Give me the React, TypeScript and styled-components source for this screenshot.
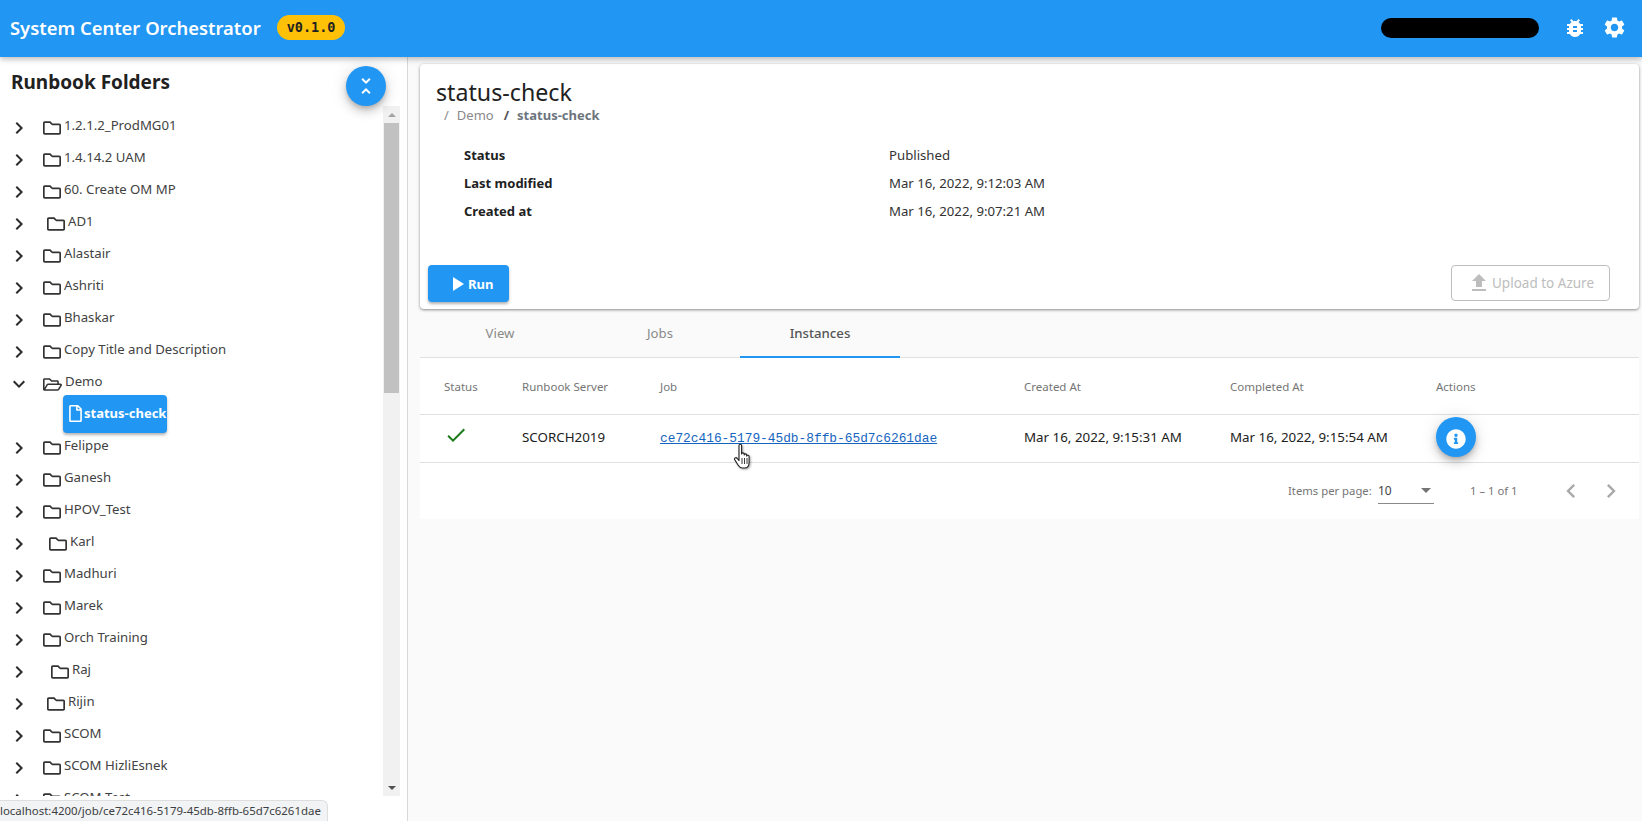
import React from "react";
import styled, { createGlobalStyle } from "styled-components";
import { FaRegFile, FaRegFolder, FaRegFolderOpen, FaInfoCircle } from "react-icons/fa";
import {
  MdBugReport,
  MdCheck,
  MdChevronLeft,
  MdChevronRight,
  MdExpandMore,
  MdFileUpload,
  MdPlayArrow,
  MdSettings,
  MdUnfoldLess,
} from "react-icons/md";

const folders = [
  { name: "1.2.1.2_ProdMG01" },
  { name: "1.4.14.2 UAM" },
  { name: "60. Create OM MP" },
  { name: "AD1", shift: 4 },
  { name: "Alastair" },
  { name: "Ashriti" },
  { name: "Bhaskar" },
  { name: "Copy Title and Description" },
  { name: "Demo", open: true },
  { name: "Felippe" },
  { name: "Ganesh" },
  { name: "HPOV_Test" },
  { name: "Karl", shift: 6 },
  { name: "Madhuri" },
  { name: "Marek" },
  { name: "Orch Training" },
  { name: "Raj", shift: 8 },
  { name: "Rijin", shift: 4 },
  { name: "SCOM" },
  { name: "SCOM HizliEsnek" },
  { name: "SCOM Test" },
];

const details = [
  { label: "Status", value: "Published" },
  { label: "Last modified", value: "Mar 16, 2022, 9:12:03 AM" },
  { label: "Created at", value: "Mar 16, 2022, 9:07:21 AM" },
];

const App: React.FunctionComponent = () => {
  return (
    <>
      <GlobalStyle />
      <Page>
        <Header>
          <Title>System Center Orchestrator</Title>
          <VersionBadge>v0.1.0</VersionBadge>
          <Spacer />
          <RedactedName />
          <HeaderIcon>
            <MdBugReport size={24} />
          </HeaderIcon>
          <HeaderIcon>
            <MdSettings size={25} />
          </HeaderIcon>
        </Header>
        <Body>
          <Sidebar>
            <SidebarTop>
              <SidebarTitle>Runbook Folders</SidebarTitle>
              <CollapseButton>
                <MdUnfoldLess size={24} />
              </CollapseButton>
            </SidebarTop>
            <TreeArea>
              <Tree>
                {folders.map((folder) => (
                  <React.Fragment key={folder.name}>
                    <TreeRow>
                      <Toggle>
                        {folder.open ? <MdExpandMore size={24} /> : <MdChevronRight size={24} />}
                      </Toggle>
                      <FolderIcon $shift={folder.shift ?? 0}>
                        {folder.open ? <FaRegFolderOpen size={19} /> : <FaRegFolder size={18} />}
                      </FolderIcon>
                      <FolderName>{folder.name}</FolderName>
                    </TreeRow>
                    {folder.open && (
                      <ChildRow>
                        <ActiveNode>
                          <FaRegFile size={17} />
                          <ActiveLabel>status-check</ActiveLabel>
                        </ActiveNode>
                      </ChildRow>
                    )}
                  </React.Fragment>
                ))}
              </Tree>
              <ScrollTrack>
                <ScrollArrow $up />
                <ScrollThumb />
                <ScrollRest />
                <ScrollArrow />
              </ScrollTrack>
            </TreeArea>
          </Sidebar>
          <Main>
            <Card>
              <CardTitle>status-check</CardTitle>
              <Breadcrumb>
                <span>/</span>
                <span>Demo</span>
                <b>/</b>
                <b>status-check</b>
              </Breadcrumb>
              <Details>
                {details.map((row) => (
                  <DetailRow key={row.label}>
                    <DetailLabel>{row.label}</DetailLabel>
                    <DetailValue>{row.value}</DetailValue>
                  </DetailRow>
                ))}
              </Details>
              <CardActions>
                <RunButton>
                  <MdPlayArrow size={24} />
                  Run
                </RunButton>
                <UploadButton disabled>
                  <MdFileUpload size={24} />
                  Upload to Azure
                </UploadButton>
              </CardActions>
            </Card>
            <Tabs>
              <Tab>View</Tab>
              <Tab>Jobs</Tab>
              <Tab $active>Instances</Tab>
            </Tabs>
            <TableCard>
              <TableHead>
                <StatusCell>Status</StatusCell>
                <ServerCell>Runbook Server</ServerCell>
                <JobCell>Job</JobCell>
                <DateCell>Created At</DateCell>
                <DateCell>Completed At</DateCell>
                <div>Actions</div>
              </TableHead>
              <TableRow>
                <StatusCell>
                  <CheckIcon>
                    <MdCheck size={24} />
                  </CheckIcon>
                </StatusCell>
                <ServerCell>SCORCH2019</ServerCell>
                <JobCell>
                  <JobLink href="#">ce72c416-5179-45db-8ffb-65d7c6261dae</JobLink>
                  <HandCursor width="20" height="27" viewBox="0 0 20 27">
                    <path
                      d="M6 2.500c0-1.600 2.600-1.600 2.600 0V11c.1-1.500 2.600-1.500 2.600.1v.8c.1-1.400 2.500-1.400 2.500.2v1c.2-1.300 2.400-1.200 2.400.4v6c0 3.200-1.500 5.500-4.500 5.500H9.500c-2.300 0-3.400-1.200-4.500-3l-3.200-5.200c-.9-1.700 1.200-2.900 2.300-1.500L6 17.500z"
                      fill="#fff"
                      stroke="#222"
                      strokeWidth="1.100"
                      strokeLinejoin="round"
                    />
                    <path d="M9 15v6M11.500 15v6M14 15v6" stroke="#222" strokeWidth="0.900" />
                  </HandCursor>
                </JobCell>
                <DateCell>Mar 16, 2022, 9:15:31 AM</DateCell>
                <DateCell>Mar 16, 2022, 9:15:54 AM</DateCell>
                <div>
                  <InfoButton>
                    <FaInfoCircle size={20} />
                  </InfoButton>
                </div>
              </TableRow>
              <Paginator>
                <PageLabel>Items per page:</PageLabel>
                <PageSelect>
                  <span>10</span>
                  <SelectCaret />
                </PageSelect>
                <PageRange>1 – 1 of 1</PageRange>
                <PageArrow>
                  <MdChevronLeft size={28} />
                </PageArrow>
                <PageArrow>
                  <MdChevronRight size={28} />
                </PageArrow>
              </Paginator>
            </TableCard>
          </Main>
        </Body>
        <StatusBubble>localhost:4200/job/ce72c416-5179-45db-8ffb-65d7c6261dae</StatusBubble>
      </Page>
    </>
  );
};

const GlobalStyle = createGlobalStyle`
  html, body {
    margin: 0;
    height: 100%;
    overflow: hidden;
  }
  body {
    font-family: "Noto Sans", "Open Sans", sans-serif;
    color: #212121;
    background: #fafafa;
  }
  * {
    box-sizing: border-box;
  }
`;

const Page = styled.div`
  display: flex;
  flex-direction: column;
  height: 821px;
  position: relative;
  overflow: hidden;
`;

const Header = styled.header`
  position: relative;
  z-index: 2;
  flex: 0 0 57px;
  display: flex;
  align-items: center;
  padding: 0 15px 2px 10px;
  background: #2196f3;
  color: #fff;
  box-shadow: 0 2px 6px rgba(0, 0, 0, 0.28);
`;

const Title = styled.div`
  font-size: 18.400px;
  font-weight: 600;
`;

const VersionBadge = styled.div`
  margin-left: 16px;
  padding: 0 10px;
  height: 25px;
  line-height: 25px;
  border-radius: 13px;
  background: #ffc107;
  color: #212121;
  font-family: "DejaVu Sans Mono", "Liberation Mono", monospace;
  font-size: 13.500px;
  font-weight: 700;
`;

const Spacer = styled.div`
  flex: 1;
`;

const RedactedName = styled.div`
  width: 158px;
  height: 20px;
  border-radius: 10px;
  background: #000;
  margin-right: 8px;
`;

const HeaderIcon = styled.div`
  display: flex;
  width: 25px;
  justify-content: center;
  margin-left: 15px;
`;

const Body = styled.div`
  flex: 1;
  min-height: 0;
  display: flex;
`;

const Sidebar = styled.aside`
  flex: 0 0 408px;
  display: flex;
  flex-direction: column;
  background: #fff;
  border-right: 1px solid #d8d8d8;
  min-height: 0;
  padding-bottom: 25px;
`;

const SidebarTop = styled.div`
  flex: 0 0 49px;
  display: flex;
  align-items: flex-start;
  justify-content: space-between;
  padding: 9px 21px 0 11px;
`;

const SidebarTitle = styled.h2`
  margin: 1px 0 0;
  font-size: 19px;
  font-weight: 700;
  line-height: 30px;
  color: #212121;
`;

const RoundButton = styled.div`
  width: 40px;
  height: 40px;
  border-radius: 50%;
  display: flex;
  align-items: center;
  justify-content: center;
  background: #2196f3;
  color: #fff;
  box-shadow: 0 3px 5px -1px rgba(0, 0, 0, 0.2), 0 6px 10px 0 rgba(0, 0, 0, 0.14),
    0 1px 18px 0 rgba(0, 0, 0, 0.12);
`;

const CollapseButton = styled(RoundButton)`
  position: relative;
  z-index: 1;
`;

const TreeArea = styled.div`
  flex: 1;
  min-height: 0;
  display: flex;
  padding-right: 7px;
`;

const Tree = styled.div`
  flex: 1;
  min-width: 0;
  overflow: hidden;
  padding-top: 5px;
`;

const TreeRow = styled.div`
  height: 32px;
  display: flex;
  align-items: center;
  color: #333;
`;

const Toggle = styled.div`
  flex: 0 0 43px;
  display: flex;
  padding-left: 7px;
  color: #2b2b2b;
  padding-top: 2px;
`;

const FolderIcon = styled.div<{ $shift: number }>`
  display: flex;
  margin-left: ${(p) => p.$shift}px;
  margin-right: 3px;
  padding-top: 2px;
  color: #333;
`;

const FolderName = styled.span`
  font-size: 13.200px;
  line-height: 18px;
  margin-bottom: 5px;
  color: #424242;
`;

const ChildRow = styled.div`
  height: 32px;
  padding-left: 63px;
  display: flex;
  align-items: center;
`;

const ActiveNode = styled.div`
  height: 38px;
  display: flex;
  align-items: center;
  gap: 0;
  padding: 0 1px 0 4px;
  margin-bottom: 3px;
  background: #2196f3;
  color: #fff;
  border-radius: 4px;
  font-size: 13px;
  font-weight: 700;
  box-shadow: 0 2px 3px rgba(0, 0, 0, 0.3);
`;

const ActiveLabel = styled.span`
  margin-bottom: 2px;
`;

const ScrollTrack = styled.div`
  flex: 0 0 17px;
  display: flex;
  flex-direction: column;
  background: #f1f1f1;
`;

const ScrollArrow = styled.div<{ $up?: boolean }>`
  flex: 0 0 17px;
  display: flex;
  align-items: center;
  justify-content: center;
  &::after {
    content: "";
    border-left: 4px solid transparent;
    border-right: 4px solid transparent;
    ${(p) => (p.$up ? "border-bottom: 4px solid #a3a3a3;" : "border-top: 4px solid #505050;")}
  }
`;

const ScrollThumb = styled.div`
  flex: 0 0 270px;
  background: #c1c1c1;
  margin: 0 1px;
`;

const ScrollRest = styled.div`
  flex: 1;
`;

const Main = styled.main`
  flex: 1;
  min-width: 0;
  padding: 7px 3px 0 12px;
  display: flex;
  flex-direction: column;
  background: #fafafa;
`;

const Card = styled.section`
  height: 245px;
  display: flex;
  flex-direction: column;
  background: #fff;
  border-radius: 4px;
  padding: 13px 29px 7px 8px;
  box-shadow: 0 1px 3px rgba(0, 0, 0, 0.45);
`;

const CardTitle = styled.h1`
  margin: 0 0 0 8px;
  font-size: 23.200px;
  font-weight: 400;
  line-height: 30px;
  color: #212121;
`;

const Breadcrumb = styled.div`
  display: flex;
  gap: 8px;
  margin-left: 16px;
  font-size: 13px;
  line-height: 16px;
  color: #8a8a8a;
  b {
    font-weight: 700;
    color: #6c757d;
  }
  b:first-of-type {
    margin-left: 2px;
    color: #555;
  }
`;

const Details = styled.div`
  margin-top: 18px;
  padding-left: 36px;
  flex: 1;
`;

const DetailRow = styled.div`
  height: 28px;
  display: flex;
  align-items: center;
  font-size: 13.200px;
`;

const DetailLabel = styled.div`
  flex: 0 0 425px;
  font-weight: 700;
  font-size: 13px;
  color: #212121;
`;

const DetailValue = styled.div`
  color: #333;
`;

const CardActions = styled.div`
  display: flex;
  justify-content: space-between;
  align-items: flex-start;
`;

const RunButton = styled.button`
  width: 81px;
  height: 37px;
  display: flex;
  align-items: center;
  padding: 0 0 0 20px;
  border: 0;
  border-radius: 4px;
  background: #2196f3;
  color: #fff;
  font: 700 13px "Noto Sans", sans-serif;
  box-shadow: 0 2px 3px rgba(0, 0, 0, 0.3);
  svg {
    margin: 0 -1px 0 -3px;
  }
`;

const UploadButton = styled.button`
  width: 159px;
  height: 36px;
  display: flex;
  align-items: center;
  padding: 0 0 0 15px;
  background: #fff;
  border: 1px solid #bdbdbd;
  border-radius: 4px;
  color: #bdbdbd;
  font: 400 13.500px "Noto Sans", sans-serif;
  svg {
    margin-right: 1px;
  }
`;

const Tabs = styled.nav`
  height: 49px;
  display: flex;
  border-bottom: 1px solid #e0e0e0;
`;

const Tab = styled.div<{ $active?: boolean }>`
  width: 160px;
  display: flex;
  align-items: center;
  justify-content: center;
  font-size: 13.200px;
  font-weight: ${(p) => (p.$active ? 500 : 400)};
  color: ${(p) => (p.$active ? "#555" : "#8a8a8a")};
  border-bottom: ${(p) => (p.$active ? "2px solid #2196f3" : "2px solid transparent")};
  margin-bottom: -1px;
`;

const TableCard = styled.section`
  background: #fff;
  height: 161px;
`;

const columns = "grid-template-columns: 78px 138px 364px 206px 206px 1fr;";

const TableHead = styled.div`
  height: 57px;
  display: grid;
  ${columns}
  align-items: center;
  padding-left: 24px;
  border-bottom: 1px solid #e0e0e0;
  font-size: 11.500px;
  color: #757575;
`;

const TableRow = styled.div`
  height: 48px;
  display: grid;
  ${columns}
  align-items: center;
  padding: 0 0 3px 24px;
  border-bottom: 1px solid #e0e0e0;
  font-size: 13.350px;
  color: #212121;
`;

const StatusCell = styled.div``;
const ServerCell = styled.div``;
const DateCell = styled.div``;

const JobCell = styled.div`
  position: relative;
`;

const CheckIcon = styled.span`
  display: inline-flex;
  color: #1b7a1b;
  margin: -4px 0 0 0;
  vertical-align: top;
`;

const JobLink = styled.a`
  font-family: "Liberation Mono", monospace;
  font-size: 12.830px;
  color: #1565c0;
  text-decoration: underline;
`;

const HandCursor = styled.svg`
  position: absolute;
  left: 73px;
  top: 15px;
  filter: drop-shadow(1px 1px 1px rgba(0, 0, 0, 0.35));
`;

const InfoButton = styled(RoundButton)`
  margin-top: 0;
  padding-top: 3px;
`;

const Paginator = styled.div`
  height: 55px;
  display: flex;
  align-items: center;
  font-size: 11.300px;
  color: #757575;
  padding-left: 868px;
`;

const PageLabel = styled.div`
  width: 90px;
`;

const PageSelect = styled.div`
  width: 56px;
  height: 26px;
  display: flex;
  align-items: center;
  justify-content: space-between;
  border-bottom: 1px solid #8a8a8a;
  font-size: 12px;
  color: #424242;
  padding-right: 3px;
`;

const SelectCaret = styled.div`
  border-left: 5px solid transparent;
  border-right: 5px solid transparent;
  border-top: 5px solid #757575;
`;

const PageRange = styled.div`
  width: 81px;
  margin-left: 36px;
`;

const PageArrow = styled.div`
  display: flex;
  width: 40px;
  justify-content: center;
  color: #a8a8a8;
`;

const StatusBubble = styled.div`
  position: absolute;
  left: 0;
  bottom: 0;
  height: 21px;
  width: 328px;
  padding-top: 2px;
  overflow: hidden;
  white-space: nowrap;
  background: #f1f3f4;
  border: 1px solid #dedede;
  border-left: 0;
  border-bottom: 0;
  border-top-right-radius: 6px;
  font-size: 11.450px;
  color: #3c4043;
`;

export default App;
